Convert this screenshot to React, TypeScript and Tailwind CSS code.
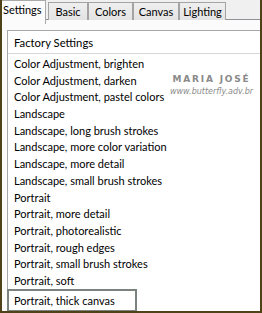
import React from "react";

const items = [
  "Color Adjustment, brighten",
  "Color Adjustment, darken",
  "Color Adjustment, pastel colors",
  "Landscape",
  "Landscape, long brush strokes",
  "Landscape, more color variation",
  "Landscape, more detail",
  "Landscape, small brush strokes",
  "Portrait",
  "Portrait, more detail",
  "Portrait, photorealistic",
  "Portrait, rough edges",
  "Portrait, small brush strokes",
  "Portrait, soft",
];

const tabs = [
  { label: "Basic", w: "w-[40px]" },
  { label: "Colors", w: "w-[45px]" },
  { label: "Canvas", w: "w-[46px]" },
  { label: "Lighting", w: "w-[47px]" },
];

export default function App() {
  return (
    <div
      className="w-[262px] h-[313px] flex flex-col bg-[#f0f0f0] border-l-2 border-r-2 border-b-2 border-[#4f4219] overflow-hidden text-black"
      style={{ fontFamily: 'Lato, sans-serif' }}
    >
      <div className="h-[20px] shrink-0 flex items-start border-b border-[#8e9196] relative">
        <div className="relative z-10 h-[24px] w-[44px] bg-[#fbfbfb] border-r border-t border-[#a9a9a9] text-[11px] leading-[18px] pl-[1px]">
          Settings
        </div>
        <div className="flex ml-[2px] mt-[2px]">
          {tabs.map((t) => (
            <div
              key={t.label}
              className={`${t.w} h-[18px] bg-gradient-to-b from-[#efefef] to-[#e3e3e3] border border-b-0 border-[#a3a3a3] text-[11px] leading-[17px] text-center`}
            >
              {t.label}
            </div>
          ))}
        </div>
      </div>
      <div className="flex-1 flex flex-col bg-[#fbfbfb] pl-[5px] pt-[10px] relative">
        <div className="flex-1 flex flex-col bg-white border-l border-t border-[#a7a7a7] text-[11px]">
          <div className="h-[23px] shrink-0 border-b border-[#d8d8d8] pl-[6px] leading-[24px] text-[11.3px]">
            Factory Settings
          </div>
          <div className="pt-[1px]">
            {items.map((it) => (
              <div key={it} className="h-[16.7px] leading-[18px] pl-[6px] whitespace-nowrap">
                {it}
              </div>
            ))}
            <div className="w-[130px] h-[23px] border-2 border-[#7a837d] -ml-[1px] pl-[5px] leading-[20px] whitespace-nowrap">
              Portrait, thick canvas
            </div>
          </div>
        </div>
        <div className="absolute left-[168px] top-[54px] flex flex-col items-center text-[#8a8a8a]">
          <div
            className="text-[9px] tracking-[1.8px] leading-[10px] font-semibold"
            style={{ fontFamily: '"DejaVu Sans", sans-serif', textShadow: "0 0 1px #ffffff" }}
          >
            MARIA JOSÉ
          </div>
          <div
            className="text-[8px] italic leading-[10px] mt-[3px]"
            style={{ fontFamily: '"DejaVu Sans", sans-serif' }}
          >
            www.butterfly.adv.br
          </div>
        </div>
      </div>
    </div>
  );
}
